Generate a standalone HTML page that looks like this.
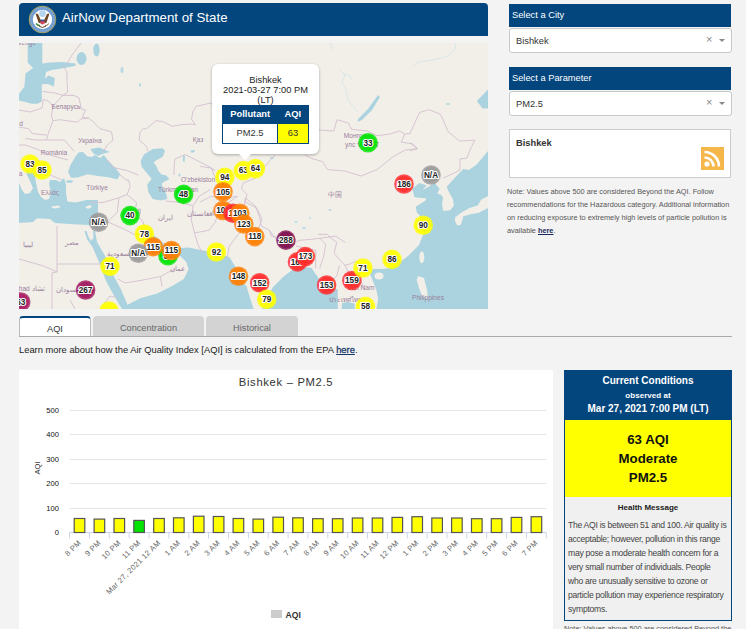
<!DOCTYPE html>
<html><head><meta charset="utf-8">
<style>
*{box-sizing:border-box;margin:0;padding:0}
html,body{width:746px;height:629px;overflow:hidden;background:#f3f3f3;font-family:"Liberation Sans",sans-serif;color:#333}
.abs{position:absolute}
#hdr{left:19px;top:3px;width:469px;height:33px;background:#03467e;border-radius:4px 4px 0 0}
#hdr .t{position:absolute;left:43px;top:7px;font-size:13.3px;color:#fff;white-space:nowrap}
#map{left:19px;top:43px;width:469px;height:266px;overflow:hidden;background:#f2efe9}
.sh{left:509px;width:222px;height:23px;background:#03467e;color:#fff;font-size:9.3px;padding:6px 0 0 3px;white-space:nowrap}
.sel{left:509px;width:222.5px;height:25px;background:#fff;border:1px solid #c8c8c8;border-radius:3px;font-size:9.3px;color:#333;padding:7px 0 0 6px}
.sel .x{position:absolute;left:196px;top:3.5px;font-size:11px;color:#888}
.sel .ar{position:absolute;left:209px;top:10px;width:0;height:0;border-left:3.2px solid transparent;border-right:3.2px solid transparent;border-top:3.6px solid #888}
#cbox{left:509px;top:129px;width:222px;height:49px;background:#fff;border:1px solid #ccc;font-weight:bold;font-size:9.3px;padding:8px 0 0 6px;color:#333}
#rss{left:701px;top:147px;width:23px;height:23px;background:#f6b74a}
#note{left:507px;top:185px;width:226px;font-size:7.33px;line-height:13.07px;color:#555}
#note b{color:#1a2a5a;text-decoration:underline}
.tab{top:316px;height:21px;background:#d3d3d3;border-radius:4px 4px 0 0;font-size:9.2px;color:#666;text-align:center;padding-top:7px}
#tab1{left:19px;width:72px;background:#fff;border:1px solid #bbb;border-top:2px solid #03467e;border-bottom:none;color:#333;padding-top:6px}
#tab2{left:93px;width:111px}
#tab3{left:206px;width:92px}
#tline{left:19px;top:336px;width:713px;height:1px;background:#aaa}
#learn{left:19px;top:345px;font-size:9.35px;color:#222;white-space:nowrap}
#learn b{color:#1a3a6a;text-decoration:underline;text-decoration-thickness:1.2px;font-weight:normal;-webkit-text-stroke:0.3px #1a3a6a}
#chart{left:19px;top:370px;width:534px;height:259px;background:#fff}
#cc{left:564px;top:370px;width:168px;height:251px;border:1.5px solid #03467e;background:#f0f0f0}
#cch{position:absolute;left:0;top:0;width:100%;height:49px;background:#03467e}
#ccy{position:absolute;left:0;top:49px;width:100%;height:76.5px;background:#ffff00}
.ln{position:absolute;left:0;width:100%;text-align:center;font-weight:bold;line-height:1;white-space:nowrap}
#hmt{position:absolute;left:3px;top:147px;width:159.5px;font-size:8.6px;letter-spacing:-0.28px;line-height:14.05px;color:#444}
#note2{left:564px;top:623.5px;font-size:7.33px;color:#555;white-space:nowrap}
</style></head><body>

<div id="hdr" class="abs">
  <svg class="abs" style="left:9px;top:2px" width="29" height="29" viewBox="0 0 29 29">
    <circle cx="14.5" cy="14.5" r="13.3" fill="#6e9bd0" stroke="#b8a64e" stroke-width="0.9"/>
    <circle cx="14.5" cy="14.5" r="11.6" fill="none" stroke="#a9c4e4" stroke-width="0.8" stroke-dasharray="0.8 1.2"/>
    <circle cx="14.5" cy="14.5" r="9.7" fill="#ffffff"/>
    <circle cx="14.5" cy="8.6" r="3.4" fill="#b5d5ec"/>
    <path d="M7.5 8.5 L10 9 L13.2 16 L12.5 18.5 L10.5 17.5 Z" fill="#6a4526"/>
    <path d="M21.5 8.5 L19 9 L15.8 16 L16.5 18.5 L18.5 17.5 Z" fill="#6a4526"/>
    <path d="M12.6 15 L16.4 15 L16.4 18.5 Q14.5 20.5 12.6 18.5 Z" fill="#d9455a"/>
    <rect x="12.6" y="14.6" width="3.8" height="1.6" fill="#2e4f9a"/>
    <path d="M8 18.5 Q10 21 12 20.5" stroke="#4a8a3a" stroke-width="1.6" fill="none"/>
    <path d="M21 18.5 Q19 21 17 20.5" stroke="#8a6a40" stroke-width="1" fill="none"/>
    <path d="M11 21 L14.5 22.5 L18 21" stroke="#6a4526" stroke-width="1" fill="none"/>
  </svg>
  <div class="t">AirNow Department of State</div>
</div>

<div id="map" class="abs">
<svg width="469" height="266" viewBox="19 43 469 266" style="display:block;position:absolute;left:0;top:0">
<rect x="19" y="43" width="469" height="266" fill="#f2efe9"/>
<polygon fill="#aad3df" points="27.7,43.0 42.3,43.0 42.3,60.4 42.3,63.6 50.0,62.5 62.4,62.0 75.5,63.6 75.5,65.8 64.6,68.0 51.6,70.1 46.0,72.0 45.0,78.8 48.3,75.6 54.8,78.0 54.0,86.4 48.0,84.0 41.8,84.3 41.8,101.6 37.5,103.8 32.0,103.8 19.0,100.5 19.0,94.0 24.4,86.4 25.5,73.4 33.1,68.0 27.7,62.5"/>
<ellipse cx="81.5" cy="58.5" rx="5" ry="6.5" fill="#aad3df"/>
<ellipse cx="96.5" cy="50" rx="3.2" ry="6.5" fill="#aad3df"/>
<polygon fill="#aad3df" points="68.1,172.0 70.3,165.3 75.5,156.4 78.5,152.6 83.0,151.9 87.5,156.4 91.9,157.1 94.9,154.9 100.1,157.9 103.8,154.9 108.3,160.8 115.7,168.3 120.2,174.2 117.2,179.4 108.3,177.2 96.4,175.7 87.5,174.2 78.5,177.2 71.1,178.0"/>
<polygon fill="#aad3df" points="90.4,148.9 99.4,147.4 109.8,151.9 102.3,154.1 98.0,156.0 93.4,153.4"/>
<polygon fill="#aad3df" points="19.0,183.0 22.0,190.0 25.0,194.0 30.0,193.0 33.0,188.0 30.0,181.0 27.0,175.0 26.0,170.0 32.0,170.0 35.0,176.0 36.0,183.0 38.0,192.0 41.0,197.0 45.0,200.0 49.0,199.0 51.0,192.0 49.0,184.0 50.0,180.0 56.0,180.0 60.0,182.0 64.0,178.0 66.0,185.0 66.0,193.0 67.3,201.4 75.7,202.6 86.5,200.0 97.9,200.0 98.0,213.0 98.6,221.0 89.3,225.0 73.0,224.3 55.0,223.0 50.0,219.0 37.0,218.3 33.0,222.0 19.0,223.0"/>
<polygon fill="#f2efe9" points="51.7,206.5 58.0,205.5 61.0,207.0 56.0,208.5 52.0,208.0"/>
<polygon fill="#f2efe9" points="85.0,207.0 90.0,205.0 92.0,207.0 88.0,209.0"/>
<ellipse cx="69.5" cy="181.5" rx="3.5" ry="1.3" fill="#aad3df"/>
<polygon fill="#aad3df" points="140.6,161.1 143.9,154.5 152.8,148.9 162.8,148.3 165.0,151.1 162.8,156.7 156.1,160.6 153.4,162.2 156.1,165.6 158.4,171.1 161.7,174.5 166.2,175.6 169.5,179.0 165.0,181.2 161.7,183.4 162.8,187.8 166.2,193.4 167.3,199.0 160.6,200.6 152.8,199.0 148.4,192.3 147.2,184.5 151.7,178.9 147.2,173.4 141.7,166.7"/>
<polygon fill="#aad3df" points="190.6,150.5 195.0,150.0 194.0,152.5 191.0,152.5"/>
<polygon fill="#aad3df" points="183.0,155.6 185.0,156.0 184.5,162.2 182.8,161.0"/>
<polygon fill="#aad3df" points="179.0,173.4 180.6,174.0 180.0,176.7 178.4,176.0"/>
<polygon fill="#aad3df" points="84.5,231.0 86.5,231.0 88.5,237.0 91.0,241.0 93.5,238.0 93.0,231.0 95.0,231.0 97.0,242.0 105.0,255.7 114.0,276.6 121.0,289.5 125.5,300.0 127.5,305.0 130.0,309.0 122.0,309.0 115.0,297.5 106.0,281.0 99.0,262.0 92.5,247.0 87.0,239.0"/>
<polygon fill="#aad3df" points="152.0,234.0 157.0,238.0 163.0,243.0 170.0,246.0 176.0,248.5 178.0,251.0 175.0,253.0 169.0,251.0 162.0,248.0 155.0,242.0 150.0,237.0"/>
<polygon fill="#aad3df" points="124.0,309.0 127.0,305.0 140.3,298.2 157.2,293.4 171.7,286.2 183.8,279.0 188.6,269.3 186.2,262.0 178.9,254.8 176.5,250.0 180.0,248.0 188.6,247.6 200.7,250.0 215.1,252.4 229.6,257.2 236.9,269.3 234.4,276.5 240.0,280.0 246.5,286.2 250.0,298.0 253.7,309.0"/>
<polygon fill="#aad3df" points="262.2,309.0 268.0,296.0 272.9,287.2 283.6,276.4 292.2,270.0 302.9,266.8 311.5,267.9 315.8,274.3 322.2,282.9 330.0,287.0 337.8,289.4 337.8,309.0"/>
<polygon fill="#aad3df" points="341.6,309.0 342.0,303.0 348.0,302.0 354.7,303.5 354.7,309.0"/>
<polygon fill="#aad3df" points="376.3,309.0 378.2,298.8 376.3,289.4 372.5,280.0 370.0,274.0 373.0,269.0 383.0,269.0 390.0,268.0 400.3,262.0 408.0,256.0 413.0,251.0 419.0,245.0 422.9,235.3 425.0,228.0 420.5,216.3 416.9,212.7 415.7,206.7 425.3,200.8 426.5,198.4 414.5,197.2 412.2,188.8 419.3,182.9 426.5,185.3 422.9,190.0 428.8,186.5 434.8,182.9 439.6,188.8 437.2,193.6 440.8,194.8 443.1,197.2 442.0,204.3 443.1,210.9 450.3,210.3 453.9,205.5 452.7,198.4 449.1,192.4 446.7,186.8 456.7,175.7 463.4,169.0 469.0,170.1 476.7,164.5 488.0,151.0 488.0,309.0"/>
<polygon fill="#aad3df" points="488.0,89.5 476.8,101.0 482.6,108.6 488.0,108.6"/>
<polygon fill="#f2efe9" points="455.0,217.5 461.0,212.7 469.4,207.9 477.7,205.5 481.3,199.6 488.0,196.0 488.0,207.9 478.9,212.7 471.8,213.9 463.4,216.3 461.0,224.6 457.5,225.8 455.0,221.0"/>
<ellipse cx="421.8" cy="257.3" rx="2.5" ry="6" fill="#f2efe9"/>
<polygon fill="#f2efe9" points="418.0,276.0 424.0,278.0 427.0,290.0 428.0,299.0 422.0,296.0 419.0,288.0 416.7,280.0"/>
<ellipse cx="379" cy="276" rx="4.5" ry="3.5" fill="#f2efe9"/>
<polygon fill="#aad3df" points="378.0,95.0 380.0,97.0 372.0,110.0 362.0,120.0 357.6,122.0 358.0,119.0 368.0,109.0"/>
<polyline fill="none" stroke="#cfe2e6" stroke-width="0.7" points="340,70 345,75 342,82 346,90 348,100 354,108 357,112"/>
<polyline fill="none" stroke="#cfe2e6" stroke-width="0.7" points="343,73 350,76 352,80"/>
<polyline fill="none" stroke="#cfe2e6" stroke-width="0.7" points="330,43 333,50"/>
<polyline fill="none" stroke="#cfe2e6" stroke-width="0.7" points="455.3,43 455.3,48.5 449.8,55.4 434.6,59.6 418,62.4 412.4,66.5"/>
<ellipse cx="448" cy="104" rx="2" ry="1" fill="#b5d8e3"/>
<ellipse cx="296" cy="222" rx="1.5" ry="1" fill="#b5d8e3"/>
<ellipse cx="304" cy="228" rx="2" ry="1" fill="#b5d8e3"/>
<ellipse cx="310" cy="218" rx="1.2" ry="0.8" fill="#b5d8e3"/>
<ellipse cx="330" cy="210" rx="1.5" ry="1" fill="#b5d8e3"/>
<ellipse cx="272" cy="158" rx="2" ry="1" fill="#b5d8e3"/>
<ellipse cx="122" cy="70" rx="1.5" ry="3" fill="#b5d8e3"/>
<ellipse cx="140" cy="85" rx="1" ry="2" fill="#b5d8e3"/>
<polyline fill="none" stroke="#d2c0cf" stroke-width="0.9" points="81.0,43.0 72.0,55.0 65.5,66.0"/>
<polyline fill="none" stroke="#d2c0cf" stroke-width="0.9" points="63.0,66.0 67.0,72.0 66.9,80.0 67.7,92.2"/>
<polyline fill="none" stroke="#d2c0cf" stroke-width="0.9" points="42.5,91.4 55.0,93.0 62.8,95.4 67.7,92.2"/>
<polyline fill="none" stroke="#d2c0cf" stroke-width="0.9" points="43.3,99.5 48.2,101.0 53.0,106.0 62.8,95.4 74.0,95.4 79.0,97.8 81.5,109.2 85.5,110.0 82.3,117.3 88.7,118.1"/>
<polyline fill="none" stroke="#d2c0cf" stroke-width="0.9" points="53.0,106.0 51.4,115.7 53.0,120.6 59.6,119.7 77.4,122.2 80.6,119.0 88.7,118.1"/>
<polyline fill="none" stroke="#d2c0cf" stroke-width="0.9" points="88.7,118.1 93.6,122.2 100.0,128.7 111.5,131.9 113.0,140.0 107.4,144.9 103.3,151.4"/>
<polyline fill="none" stroke="#d2c0cf" stroke-width="0.9" points="53.0,120.6 48.2,133.5 46.6,140.0 64.4,140.0 74.2,151.4"/>
<polyline fill="none" stroke="#d2c0cf" stroke-width="0.9" points="19.0,127.0 28.7,128.7 32.0,133.5 46.6,135.1"/>
<polyline fill="none" stroke="#d2c0cf" stroke-width="0.9" points="25.5,138.4 35.0,140.0 46.6,140.0"/>
<polyline fill="none" stroke="#d2c0cf" stroke-width="0.9" points="19.0,145.0 25.5,145.0 38.5,149.7 50.0,155.0 68.0,160.0"/>
<polyline fill="none" stroke="#d2c0cf" stroke-width="0.9" points="19.0,110.0 30.0,112.0 42.0,108.0 43.3,99.5"/>
<polyline fill="none" stroke="#d2c0cf" stroke-width="0.9" points="38.0,160.0 45.0,165.0 50.0,175.0 62.0,180.0"/>
<polyline fill="none" stroke="#d2c0cf" stroke-width="0.9" points="107.4,160.0 112.7,167.4 127.2,170.6 138.4,175.0"/>
<polyline fill="none" stroke="#d2c0cf" stroke-width="0.9" points="119.0,174.0 126.0,180.0 128.6,180.0 130.2,186.4 127.0,194.5"/>
<polyline fill="none" stroke="#d2c0cf" stroke-width="0.9" points="148.0,151.3 146.5,146.5 139.2,140.0 140.0,132.0 143.3,128.8 146.5,128.8 156.0,120.7 162.6,121.5 172.2,126.4 180.2,124.8 190.0,124.0 195.5,124.8 191.5,119.0 193.1,111.0 196.3,106.3 210.8,103.0 213.0,106.0"/>
<polyline fill="none" stroke="#d2c0cf" stroke-width="0.9" points="173.8,175.0 174.6,159.3 185.0,154.5 194.7,159.3 207.6,165.8 215.0,170.6 211.3,168.1 200.0,166.3"/>
<polyline fill="none" stroke="#d2c0cf" stroke-width="0.9" points="211.3,168.1 215.0,177.5 222.0,182.0"/>
<polyline fill="none" stroke="#d2c0cf" stroke-width="0.9" points="263.8,168.1 271.3,158.8 275.0,155.0"/>
<polyline fill="none" stroke="#d2c0cf" stroke-width="0.9" points="263.8,168.1 256.3,177.5 243.2,183.2 241.3,188.8 247.0,194.4 245.0,202.0 256.3,207.6 262.0,218.8 258.0,230.0"/>
<polyline fill="none" stroke="#d2c0cf" stroke-width="0.9" points="200.0,202.0 211.3,196.3 224.4,198.2 237.5,196.3"/>
<polyline fill="none" stroke="#d2c0cf" stroke-width="0.9" points="305.0,155.0 312.6,158.8 322.5,161.5 327.3,169.5 345.0,171.1 361.1,176.0 377.2,169.5 385.2,163.0 393.3,156.6 404.6,150.2 417.4,148.6 412.6,143.8 401.3,142.2 404.6,134.1 399.7,130.9 390.0,134.1 377.2,135.7 367.6,131.0 351.5,129.3 348.3,122.9 337.0,119.7 333.8,131.0 319.3,130.1 318.0,128.0"/>
<polyline fill="none" stroke="#d2c0cf" stroke-width="0.9" points="404.6,134.1 410.0,133.5 419.5,112.5 429.1,109.6 440.5,114.4 448.2,131.6 459.6,141.1 474.9,140.1 470.0,150.0 467.0,158.0 460.0,159.0 460.0,170.0 452.0,174.0 443.3,178.0"/>
<polyline fill="none" stroke="#d2c0cf" stroke-width="0.9" points="410.0,143.0 417.6,148.7 410.0,150.6"/>
<polyline fill="none" stroke="#d2c0cf" stroke-width="0.9" points="90.0,202.5 102.9,202.5 119.0,197.7 127.0,194.5"/>
<polyline fill="none" stroke="#d2c0cf" stroke-width="0.9" points="119.0,197.7 117.3,212.2 107.7,221.8"/>
<polyline fill="none" stroke="#d2c0cf" stroke-width="0.9" points="127.0,194.5 136.6,202.5 135.0,212.2 143.0,221.8 144.7,229.9"/>
<polyline fill="none" stroke="#d2c0cf" stroke-width="0.9" points="107.7,221.8 122.2,228.3 135.0,234.7"/>
<polyline fill="none" stroke="#d2c0cf" stroke-width="0.9" points="99.7,228.3 107.7,221.8"/>
<polyline fill="none" stroke="#d2c0cf" stroke-width="0.9" points="95.0,222.0 98.0,230.0 99.7,228.3"/>
<polyline fill="none" stroke="#d2c0cf" stroke-width="0.9" points="165.6,201.0 180.0,202.5 193.0,205.7 199.4,196.1 210.0,189.7"/>
<polyline fill="none" stroke="#d2c0cf" stroke-width="0.9" points="193.0,205.7 191.3,220.2 194.6,233.0 197.8,244.3 202.6,254.0"/>
<polyline fill="none" stroke="#d2c0cf" stroke-width="0.9" points="194.6,233.0 209.0,230.2 215.1,222.2 219.1,212.1 225.0,205.0 237.5,196.3"/>
<polyline fill="none" stroke="#d2c0cf" stroke-width="0.9" points="245.3,198.0 241.2,230.2 235.2,238.3 229.2,246.3 227.2,258.4"/>
<polyline fill="none" stroke="#d2c0cf" stroke-width="0.9" points="245.3,198.0 255.3,206.0 259.3,216.1 261.4,226.2 269.4,230.2 271.4,236.2 281.5,238.3 295.5,242.3 299.6,240.3 311.6,239.3 319.7,238.3 335.8,236.2 345.0,242.3"/>
<polyline fill="none" stroke="#d2c0cf" stroke-width="0.9" points="269.4,230.2 275.0,238.0 287.5,244.3 295.5,244.3"/>
<polyline fill="none" stroke="#d2c0cf" stroke-width="0.9" points="296.0,246.0 305.0,248.0 315.7,250.3 315.7,268.4"/>
<polyline fill="none" stroke="#d2c0cf" stroke-width="0.9" points="319.7,238.3 325.7,244.3 323.7,256.4 319.7,268.4"/>
<polyline fill="none" stroke="#d2c0cf" stroke-width="0.9" points="318.0,234.4 327.4,234.4 331.4,238.4 336.8,242.4 334.1,253.2 339.5,259.9 344.9,265.2 350.2,263.9 355.6,261.2 361.0,263.9 366.3,269.2"/>
<polyline fill="none" stroke="#d2c0cf" stroke-width="0.9" points="339.5,265.2 336.8,276.0 331.4,281.3 336.8,294.7"/>
<polyline fill="none" stroke="#d2c0cf" stroke-width="0.9" points="344.9,265.2 350.2,276.0 361.0,281.3 365.0,290.0"/>
<polyline fill="none" stroke="#d2c0cf" stroke-width="0.9" points="57.0,226.0 57.0,272.0"/>
<polyline fill="none" stroke="#d2c0cf" stroke-width="0.9" points="57.0,264.0 101.0,264.0"/>
<polyline fill="none" stroke="#d2c0cf" stroke-width="0.9" points="19.0,259.0 43.3,265.9 57.0,272.0 52.0,272.8 52.0,309.0"/>
<polyline fill="none" stroke="#d2c0cf" stroke-width="0.9" points="70.0,300.0 75.0,309.0"/>
<polyline fill="none" stroke="#d2c0cf" stroke-width="0.9" points="100.0,309.0 110.0,296.0 117.0,297.6"/>
<polyline fill="none" stroke="#d2c0cf" stroke-width="0.9" points="118.0,279.0 125.0,283.0 143.0,280.0 160.4,276.6 175.0,268.6"/>
<polyline fill="none" stroke="#d2c0cf" stroke-width="0.9" points="160.4,276.6 162.0,286.3"/>
<text x="66" y="109" text-anchor="middle" font-size="6.6" fill="#9a7f9c" style="font-family:'Liberation Sans'">Беларусь</text>
<text x="90" y="143" text-anchor="middle" font-size="6.6" fill="#9a7f9c" style="font-family:'Liberation Sans'">Україна</text>
<text x="54" y="155" text-anchor="middle" font-size="6.6" fill="#9a7f9c" style="font-family:'Liberation Sans'">România</text>
<text x="97" y="190" text-anchor="middle" font-size="6.6" fill="#9a7f9c" style="font-family:'Liberation Sans'">Türkiye</text>
<text x="50" y="195" text-anchor="middle" font-size="6.6" fill="#9a7f9c" style="font-family:'Liberation Sans'">Ελλάς</text>
<text x="198" y="142" text-anchor="middle" font-size="6.6" fill="#9a7f9c" style="font-family:'Liberation Sans'">Қаз</text>
<text x="198" y="182" text-anchor="middle" font-size="6.6" fill="#9a7f9c" style="font-family:'Liberation Sans'">O'zbekiston</text>
<text x="178" y="192" text-anchor="middle" font-size="6.6" fill="#9a7f9c" style="font-family:'Liberation Sans'">Türkmenistan</text>
<text x="165" y="220" text-anchor="middle" font-size="6.6" fill="#9a7f9c" style="font-family:'Liberation Sans'">ایران</text>
<text x="72" y="245" text-anchor="middle" font-size="6.6" fill="#9a7f9c" style="font-family:'Liberation Sans'">مصر</text>
<text x="28" y="247" text-anchor="middle" font-size="6.6" fill="#9a7f9c" style="font-family:'Liberation Sans'">ليبيا</text>
<text x="30" y="291" text-anchor="middle" font-size="6.6" fill="#9a7f9c" style="font-family:'Liberation Sans'">chad تشاد</text>
<text x="68" y="292" text-anchor="middle" font-size="6.6" fill="#9a7f9c" style="font-family:'Liberation Sans'">السودان</text>
<text x="177" y="271" text-anchor="middle" font-size="6.6" fill="#9a7f9c" style="font-family:'Liberation Sans'">عمان</text>
<text x="120" y="256" text-anchor="middle" font-size="6.6" fill="#9a7f9c" style="font-family:'Liberation Sans'">السعودية</text>
<text x="132" y="214" text-anchor="middle" font-size="6.6" fill="#9a7f9c" style="font-family:'Liberation Sans'">العراق</text>
<text x="200" y="216" text-anchor="middle" font-size="6.6" fill="#9a7f9c" style="font-family:'Liberation Sans'">افغانستان</text>
<text x="335" y="197" text-anchor="middle" font-size="6.6" fill="#9a7f9c" style="font-family:'Liberation Sans'">中国</text>
<text x="355" y="138" text-anchor="middle" font-size="6.6" fill="#9a7f9c" style="font-family:'Liberation Sans'">Монгол</text>
<text x="362" y="147" text-anchor="middle" font-size="6.6" fill="#9a7f9c" style="font-family:'Liberation Sans'">улс ᠮᠣᠩᠭᠣᠯ</text>
<text x="361" y="290" text-anchor="middle" font-size="6.6" fill="#9a7f9c" style="font-family:'Liberation Sans'">Việt Nam</text>
<text x="345" y="302" text-anchor="middle" font-size="6.6" fill="#9a7f9c" style="font-family:'Liberation Sans'">ประเทศไทย</text>
<text x="428" y="300" text-anchor="middle" font-size="6.6" fill="#9a7f9c" style="font-family:'Liberation Sans'">Philippines</text>
<text x="25" y="45" text-anchor="middle" font-size="6.6" fill="#9a7f9c" style="font-family:'Liberation Sans'">Sverige</text>
<text x="21" y="126" text-anchor="middle" font-size="6.6" fill="#9a7f9c" style="font-family:'Liberation Sans'">d</text>
<text x="20.5" y="176" text-anchor="middle" font-size="6.6" fill="#9a7f9c" style="font-family:'Liberation Sans'">a</text>
<circle cx="30" cy="164" r="9.8" fill="#ffff00" fill-opacity="0.8"/>
<circle cx="30" cy="164" r="8.3" fill="#ffff00" fill-opacity="0.7"/>
<text x="30" y="166.8" text-anchor="middle" font-size="8.2" font-weight="bold" fill="#222" stroke="#fff" stroke-width="2.2" paint-order="stroke" style="font-family:'Liberation Sans'">83</text>
<circle cx="42" cy="170" r="9.8" fill="#ffff00" fill-opacity="0.8"/>
<circle cx="42" cy="170" r="8.3" fill="#ffff00" fill-opacity="0.7"/>
<text x="42" y="172.8" text-anchor="middle" font-size="8.2" font-weight="bold" fill="#222" stroke="#fff" stroke-width="2.2" paint-order="stroke" style="font-family:'Liberation Sans'">85</text>
<circle cx="183.6" cy="194.4" r="9.8" fill="#00e400" fill-opacity="0.8"/>
<circle cx="183.6" cy="194.4" r="8.3" fill="#00e400" fill-opacity="0.7"/>
<text x="183.6" y="197.20000000000002" text-anchor="middle" font-size="8.2" font-weight="bold" fill="#222" stroke="#fff" stroke-width="2.2" paint-order="stroke" style="font-family:'Liberation Sans'">48</text>
<circle cx="130" cy="215.6" r="9.8" fill="#00e400" fill-opacity="0.8"/>
<circle cx="130" cy="215.6" r="8.3" fill="#00e400" fill-opacity="0.7"/>
<text x="130" y="218.4" text-anchor="middle" font-size="8.2" font-weight="bold" fill="#222" stroke="#fff" stroke-width="2.2" paint-order="stroke" style="font-family:'Liberation Sans'">40</text>
<circle cx="98.6" cy="222.2" r="9.8" fill="#9a9a9a" fill-opacity="0.8"/>
<circle cx="98.6" cy="222.2" r="8.3" fill="#9a9a9a" fill-opacity="0.7"/>
<text x="98.6" y="225.0" text-anchor="middle" font-size="8.2" font-weight="bold" fill="#222" stroke="#fff" stroke-width="2.2" paint-order="stroke" style="font-family:'Liberation Sans'">N/A</text>
<circle cx="168" cy="255.8" r="9.8" fill="#00e400" fill-opacity="0.8"/>
<circle cx="168" cy="255.8" r="8.3" fill="#00e400" fill-opacity="0.7"/>
<text x="168" y="258.6" text-anchor="middle" font-size="8.2" font-weight="bold" fill="#222" stroke="#fff" stroke-width="2.2" paint-order="stroke" style="font-family:'Liberation Sans'">34</text>
<circle cx="144.4" cy="234" r="9.8" fill="#ffff00" fill-opacity="0.8"/>
<circle cx="144.4" cy="234" r="8.3" fill="#ffff00" fill-opacity="0.7"/>
<text x="144.4" y="236.8" text-anchor="middle" font-size="8.2" font-weight="bold" fill="#222" stroke="#fff" stroke-width="2.2" paint-order="stroke" style="font-family:'Liberation Sans'">78</text>
<circle cx="153.1" cy="246.7" r="9.8" fill="#ff7e00" fill-opacity="0.8"/>
<circle cx="153.1" cy="246.7" r="8.3" fill="#ff7e00" fill-opacity="0.7"/>
<text x="153.1" y="249.5" text-anchor="middle" font-size="8.2" font-weight="bold" fill="#222" stroke="#fff" stroke-width="2.2" paint-order="stroke" style="font-family:'Liberation Sans'">115</text>
<circle cx="138.3" cy="253.2" r="9.8" fill="#9a9a9a" fill-opacity="0.8"/>
<circle cx="138.3" cy="253.2" r="8.3" fill="#9a9a9a" fill-opacity="0.7"/>
<text x="138.3" y="256.0" text-anchor="middle" font-size="8.2" font-weight="bold" fill="#222" stroke="#fff" stroke-width="2.2" paint-order="stroke" style="font-family:'Liberation Sans'">N/A</text>
<circle cx="171.4" cy="250.5" r="9.8" fill="#ff7e00" fill-opacity="0.8"/>
<circle cx="171.4" cy="250.5" r="8.3" fill="#ff7e00" fill-opacity="0.7"/>
<text x="171.4" y="253.3" text-anchor="middle" font-size="8.2" font-weight="bold" fill="#222" stroke="#fff" stroke-width="2.2" paint-order="stroke" style="font-family:'Liberation Sans'">115</text>
<circle cx="216.4" cy="252" r="9.8" fill="#ffff00" fill-opacity="0.8"/>
<circle cx="216.4" cy="252" r="8.3" fill="#ffff00" fill-opacity="0.7"/>
<text x="216.4" y="254.8" text-anchor="middle" font-size="8.2" font-weight="bold" fill="#222" stroke="#fff" stroke-width="2.2" paint-order="stroke" style="font-family:'Liberation Sans'">92</text>
<circle cx="238.5" cy="276.2" r="9.8" fill="#ff7e00" fill-opacity="0.8"/>
<circle cx="238.5" cy="276.2" r="8.3" fill="#ff7e00" fill-opacity="0.7"/>
<text x="238.5" y="279.0" text-anchor="middle" font-size="8.2" font-weight="bold" fill="#222" stroke="#fff" stroke-width="2.2" paint-order="stroke" style="font-family:'Liberation Sans'">148</text>
<circle cx="110" cy="266.4" r="9.8" fill="#ffff00" fill-opacity="0.8"/>
<circle cx="110" cy="266.4" r="8.3" fill="#ffff00" fill-opacity="0.7"/>
<text x="110" y="269.2" text-anchor="middle" font-size="8.2" font-weight="bold" fill="#222" stroke="#fff" stroke-width="2.2" paint-order="stroke" style="font-family:'Liberation Sans'">71</text>
<circle cx="85.6" cy="290" r="9.8" fill="#a0145c" fill-opacity="0.8"/>
<circle cx="85.6" cy="290" r="8.3" fill="#a0145c" fill-opacity="0.7"/>
<text x="85.6" y="292.8" text-anchor="middle" font-size="8.2" font-weight="bold" fill="#222" stroke="#fff" stroke-width="2.2" paint-order="stroke" style="font-family:'Liberation Sans'">267</text>
<circle cx="20.7" cy="302" r="9.8" fill="#a81a62" fill-opacity="0.8"/>
<circle cx="20.7" cy="302" r="8.3" fill="#a81a62" fill-opacity="0.7"/>
<text x="20.7" y="304.8" text-anchor="middle" font-size="8.2" font-weight="bold" fill="#222" stroke="#fff" stroke-width="2.2" paint-order="stroke" style="font-family:'Liberation Sans'">63</text>
<circle cx="109" cy="311" r="9.8" fill="#ffff00" fill-opacity="0.8"/>
<circle cx="109" cy="311" r="8.3" fill="#ffff00" fill-opacity="0.7"/>
<circle cx="224.8" cy="177.3" r="9.8" fill="#ffff00" fill-opacity="0.8"/>
<circle cx="224.8" cy="177.3" r="8.3" fill="#ffff00" fill-opacity="0.7"/>
<text x="224.8" y="180.10000000000002" text-anchor="middle" font-size="8.2" font-weight="bold" fill="#222" stroke="#fff" stroke-width="2.2" paint-order="stroke" style="font-family:'Liberation Sans'">94</text>
<circle cx="243.3" cy="170.6" r="9.8" fill="#ffff00" fill-opacity="0.8"/>
<circle cx="243.3" cy="170.6" r="8.3" fill="#ffff00" fill-opacity="0.7"/>
<text x="243.3" y="173.4" text-anchor="middle" font-size="8.2" font-weight="bold" fill="#222" stroke="#fff" stroke-width="2.2" paint-order="stroke" style="font-family:'Liberation Sans'">63</text>
<circle cx="255.4" cy="168.6" r="9.8" fill="#ffff00" fill-opacity="0.8"/>
<circle cx="255.4" cy="168.6" r="8.3" fill="#ffff00" fill-opacity="0.7"/>
<text x="255.4" y="171.4" text-anchor="middle" font-size="8.2" font-weight="bold" fill="#222" stroke="#fff" stroke-width="2.2" paint-order="stroke" style="font-family:'Liberation Sans'">64</text>
<circle cx="223" cy="191.8" r="9.8" fill="#ff7e00" fill-opacity="0.8"/>
<circle cx="223" cy="191.8" r="8.3" fill="#ff7e00" fill-opacity="0.7"/>
<text x="223" y="194.60000000000002" text-anchor="middle" font-size="8.2" font-weight="bold" fill="#222" stroke="#fff" stroke-width="2.2" paint-order="stroke" style="font-family:'Liberation Sans'">105</text>
<circle cx="223" cy="210.5" r="9.8" fill="#ff7e00" fill-opacity="0.8"/>
<circle cx="223" cy="210.5" r="8.3" fill="#ff7e00" fill-opacity="0.7"/>
<text x="223" y="213.3" text-anchor="middle" font-size="8.2" font-weight="bold" fill="#222" stroke="#fff" stroke-width="2.2" paint-order="stroke" style="font-family:'Liberation Sans'">101</text>
<circle cx="233" cy="213.2" r="9.8" fill="#ff2a2a" fill-opacity="0.8"/>
<circle cx="233" cy="213.2" r="8.3" fill="#ff2a2a" fill-opacity="0.7"/>
<text x="233" y="216.0" text-anchor="middle" font-size="8.2" font-weight="bold" fill="#222" stroke="#fff" stroke-width="2.2" paint-order="stroke" style="font-family:'Liberation Sans'">10</text>
<circle cx="239.8" cy="213.2" r="9.8" fill="#ff7e00" fill-opacity="0.8"/>
<circle cx="239.8" cy="213.2" r="8.3" fill="#ff7e00" fill-opacity="0.7"/>
<text x="239.8" y="216.0" text-anchor="middle" font-size="8.2" font-weight="bold" fill="#222" stroke="#fff" stroke-width="2.2" paint-order="stroke" style="font-family:'Liberation Sans'">103</text>
<circle cx="243.8" cy="224" r="9.8" fill="#ff7e00" fill-opacity="0.8"/>
<circle cx="243.8" cy="224" r="8.3" fill="#ff7e00" fill-opacity="0.7"/>
<text x="243.8" y="226.8" text-anchor="middle" font-size="8.2" font-weight="bold" fill="#222" stroke="#fff" stroke-width="2.2" paint-order="stroke" style="font-family:'Liberation Sans'">123</text>
<circle cx="254.8" cy="236.6" r="9.8" fill="#ff7e00" fill-opacity="0.8"/>
<circle cx="254.8" cy="236.6" r="8.3" fill="#ff7e00" fill-opacity="0.7"/>
<text x="254.8" y="239.4" text-anchor="middle" font-size="8.2" font-weight="bold" fill="#222" stroke="#fff" stroke-width="2.2" paint-order="stroke" style="font-family:'Liberation Sans'">118</text>
<circle cx="285.9" cy="240.1" r="9.8" fill="#7e0c4c" fill-opacity="0.8"/>
<circle cx="285.9" cy="240.1" r="8.3" fill="#7e0c4c" fill-opacity="0.7"/>
<text x="285.9" y="242.9" text-anchor="middle" font-size="8.2" font-weight="bold" fill="#222" stroke="#fff" stroke-width="2.2" paint-order="stroke" style="font-family:'Liberation Sans'">288</text>
<circle cx="297.5" cy="261.9" r="9.8" fill="#ff2a2a" fill-opacity="0.8"/>
<circle cx="297.5" cy="261.9" r="8.3" fill="#ff2a2a" fill-opacity="0.7"/>
<text x="297.5" y="264.7" text-anchor="middle" font-size="8.2" font-weight="bold" fill="#222" stroke="#fff" stroke-width="2.2" paint-order="stroke" style="font-family:'Liberation Sans'">167</text>
<circle cx="305.4" cy="256.6" r="9.8" fill="#ff2a2a" fill-opacity="0.8"/>
<circle cx="305.4" cy="256.6" r="8.3" fill="#ff2a2a" fill-opacity="0.7"/>
<text x="305.4" y="259.40000000000003" text-anchor="middle" font-size="8.2" font-weight="bold" fill="#222" stroke="#fff" stroke-width="2.2" paint-order="stroke" style="font-family:'Liberation Sans'">173</text>
<circle cx="259.7" cy="282.8" r="9.8" fill="#ff2a2a" fill-opacity="0.8"/>
<circle cx="259.7" cy="282.8" r="8.3" fill="#ff2a2a" fill-opacity="0.7"/>
<text x="259.7" y="285.6" text-anchor="middle" font-size="8.2" font-weight="bold" fill="#222" stroke="#fff" stroke-width="2.2" paint-order="stroke" style="font-family:'Liberation Sans'">152</text>
<circle cx="266.7" cy="299.3" r="9.8" fill="#ffff00" fill-opacity="0.8"/>
<circle cx="266.7" cy="299.3" r="8.3" fill="#ffff00" fill-opacity="0.7"/>
<text x="266.7" y="302.1" text-anchor="middle" font-size="8.2" font-weight="bold" fill="#222" stroke="#fff" stroke-width="2.2" paint-order="stroke" style="font-family:'Liberation Sans'">79</text>
<circle cx="326.6" cy="285" r="9.8" fill="#ff2a2a" fill-opacity="0.8"/>
<circle cx="326.6" cy="285" r="8.3" fill="#ff2a2a" fill-opacity="0.7"/>
<text x="326.6" y="287.8" text-anchor="middle" font-size="8.2" font-weight="bold" fill="#222" stroke="#fff" stroke-width="2.2" paint-order="stroke" style="font-family:'Liberation Sans'">153</text>
<circle cx="351.9" cy="280.5" r="9.8" fill="#ff2a2a" fill-opacity="0.8"/>
<circle cx="351.9" cy="280.5" r="8.3" fill="#ff2a2a" fill-opacity="0.7"/>
<text x="351.9" y="283.3" text-anchor="middle" font-size="8.2" font-weight="bold" fill="#222" stroke="#fff" stroke-width="2.2" paint-order="stroke" style="font-family:'Liberation Sans'">159</text>
<circle cx="362.9" cy="268" r="9.8" fill="#ffff00" fill-opacity="0.8"/>
<circle cx="362.9" cy="268" r="8.3" fill="#ffff00" fill-opacity="0.7"/>
<text x="362.9" y="270.8" text-anchor="middle" font-size="8.2" font-weight="bold" fill="#222" stroke="#fff" stroke-width="2.2" paint-order="stroke" style="font-family:'Liberation Sans'">71</text>
<circle cx="365.5" cy="306.4" r="9.8" fill="#ffff00" fill-opacity="0.8"/>
<circle cx="365.5" cy="306.4" r="8.3" fill="#ffff00" fill-opacity="0.7"/>
<text x="365.5" y="309.2" text-anchor="middle" font-size="8.2" font-weight="bold" fill="#222" stroke="#fff" stroke-width="2.2" paint-order="stroke" style="font-family:'Liberation Sans'">58</text>
<circle cx="368" cy="142.8" r="9.8" fill="#00e400" fill-opacity="0.8"/>
<circle cx="368" cy="142.8" r="8.3" fill="#00e400" fill-opacity="0.7"/>
<text x="368" y="145.60000000000002" text-anchor="middle" font-size="8.2" font-weight="bold" fill="#222" stroke="#fff" stroke-width="2.2" paint-order="stroke" style="font-family:'Liberation Sans'">33</text>
<circle cx="431" cy="175" r="9.8" fill="#9a9a9a" fill-opacity="0.8"/>
<circle cx="431" cy="175" r="8.3" fill="#9a9a9a" fill-opacity="0.7"/>
<text x="431" y="177.8" text-anchor="middle" font-size="8.2" font-weight="bold" fill="#222" stroke="#fff" stroke-width="2.2" paint-order="stroke" style="font-family:'Liberation Sans'">N/A</text>
<circle cx="404" cy="184" r="9.8" fill="#ff2a2a" fill-opacity="0.8"/>
<circle cx="404" cy="184" r="8.3" fill="#ff2a2a" fill-opacity="0.7"/>
<text x="404" y="186.8" text-anchor="middle" font-size="8.2" font-weight="bold" fill="#222" stroke="#fff" stroke-width="2.2" paint-order="stroke" style="font-family:'Liberation Sans'">186</text>
<circle cx="423.2" cy="225.3" r="9.8" fill="#ffff00" fill-opacity="0.8"/>
<circle cx="423.2" cy="225.3" r="8.3" fill="#ffff00" fill-opacity="0.7"/>
<text x="423.2" y="228.10000000000002" text-anchor="middle" font-size="8.2" font-weight="bold" fill="#222" stroke="#fff" stroke-width="2.2" paint-order="stroke" style="font-family:'Liberation Sans'">90</text>
<circle cx="392" cy="259.4" r="9.8" fill="#ffff00" fill-opacity="0.8"/>
<circle cx="392" cy="259.4" r="8.3" fill="#ffff00" fill-opacity="0.7"/>
<text x="392" y="262.2" text-anchor="middle" font-size="8.2" font-weight="bold" fill="#222" stroke="#fff" stroke-width="2.2" paint-order="stroke" style="font-family:'Liberation Sans'">86</text>
</svg>
<div style="position:absolute;left:193px;top:21px;width:107px;height:90px;background:#fff;border-radius:6px;box-shadow:0 1px 3px rgba(0,0,0,0.3);text-align:center;font-size:9.3px;line-height:10.2px;color:#222;padding-top:11px">Bishkek<br>2021-03-27 7:00 PM<br>(LT)
<table style="position:absolute;left:10px;top:41px;width:87px;height:39px;border-collapse:collapse;border:1.5px solid #03467e;font-size:9.3px">
<tr style="height:18px;background:#03467e;color:#fff;font-weight:bold"><td style="width:55px;padding-bottom:2px">Pollutant</td><td style="padding-bottom:2px">AQI</td></tr>
<tr style="background:#fff;color:#333"><td style="border-right:1.5px solid #03467e">PM2.5</td><td style="background:#ffff00">63</td></tr>
</table></div>
<div style="position:absolute;left:219px;top:110px;width:0;height:0;border-left:7px solid transparent;border-right:7px solid transparent;border-top:7px solid #fff"></div>
</div>

<div class="sh abs" style="top:4px">Select a City</div>
<div class="sel abs" style="top:28px">Bishkek<span class="x">×</span><span class="ar"></span></div>
<div class="sh abs" style="top:67px">Select a Parameter</div>
<div class="sel abs" style="top:91px">PM2.5<span class="x">×</span><span class="ar"></span></div>
<div id="cbox" class="abs">Bishkek</div>
<svg id="rss" class="abs" width="23" height="23" viewBox="0 0 23 23" style="background:#f6b74a">
  <circle cx="6" cy="17" r="2.6" fill="#fff"/>
  <path d="M3.5 10.5 A9 9 0 0 1 12.5 19.5" stroke="#fff" stroke-width="2.6" fill="none"/>
  <path d="M3.5 5 A14.5 14.5 0 0 1 18 19.5" stroke="#fff" stroke-width="2.6" fill="none"/>
</svg>
<div id="note" class="abs">Note: Values above 500 are considered Beyond the AQI. Follow recommendations for the Hazardous category. Additional information on reducing exposure to extremely high levels of particle pollution is available <b>here</b>.</div>

<div class="tab abs" id="tab1">AQI</div>
<div class="tab abs" id="tab2">Concentration</div>
<div class="tab abs" id="tab3">Historical</div>
<div id="tline" class="abs"></div>
<div id="learn" class="abs">Learn more about how the Air Quality Index [AQI] is calculated from the EPA <b>here</b>.</div>

<div id="chart" class="abs">
</div>
<svg class="abs" style="left:0;top:0" width="746" height="629" viewBox="0 0 746 629">
<text x="286" y="385.5" text-anchor="middle" font-size="11.2" letter-spacing="0.7" fill="#333">Bishkek – PM2.5</text>
<line x1="69.6" x2="546.3" y1="410.5" y2="410.5" stroke="#e6e6e6" stroke-width="1"/>
<text x="59" y="413.1" text-anchor="end" font-size="7.6" fill="#111">500</text>
<line x1="69.6" x2="546.3" y1="434.5" y2="434.5" stroke="#e6e6e6" stroke-width="1"/>
<text x="59" y="437.1" text-anchor="end" font-size="7.6" fill="#111">400</text>
<line x1="69.6" x2="546.3" y1="459.5" y2="459.5" stroke="#e6e6e6" stroke-width="1"/>
<text x="59" y="462.1" text-anchor="end" font-size="7.6" fill="#111">300</text>
<line x1="69.6" x2="546.3" y1="483.5" y2="483.5" stroke="#e6e6e6" stroke-width="1"/>
<text x="59" y="486.1" text-anchor="end" font-size="7.6" fill="#111">200</text>
<line x1="69.6" x2="546.3" y1="508.5" y2="508.5" stroke="#e6e6e6" stroke-width="1"/>
<text x="59" y="511.1" text-anchor="end" font-size="7.6" fill="#111">100</text>
<text x="59" y="534.7" text-anchor="end" font-size="7.6" fill="#111">0</text>
<text transform="translate(40,468) rotate(-90)" text-anchor="middle" font-size="7.6" fill="#333">AQI</text>
<line x1="69.6" x2="546.3" y1="532.5" y2="532.5" stroke="#ccd6eb" stroke-width="1"/>
<line x1="69.6" x2="69.6" y1="532.5" y2="538.5" stroke="#ccd6eb" stroke-width="1"/>
<line x1="89.5" x2="89.5" y1="532.5" y2="538.5" stroke="#ccd6eb" stroke-width="1"/>
<line x1="109.3" x2="109.3" y1="532.5" y2="538.5" stroke="#ccd6eb" stroke-width="1"/>
<line x1="129.2" x2="129.2" y1="532.5" y2="538.5" stroke="#ccd6eb" stroke-width="1"/>
<line x1="149.0" x2="149.0" y1="532.5" y2="538.5" stroke="#ccd6eb" stroke-width="1"/>
<line x1="168.9" x2="168.9" y1="532.5" y2="538.5" stroke="#ccd6eb" stroke-width="1"/>
<line x1="188.8" x2="188.8" y1="532.5" y2="538.5" stroke="#ccd6eb" stroke-width="1"/>
<line x1="208.6" x2="208.6" y1="532.5" y2="538.5" stroke="#ccd6eb" stroke-width="1"/>
<line x1="228.5" x2="228.5" y1="532.5" y2="538.5" stroke="#ccd6eb" stroke-width="1"/>
<line x1="248.4" x2="248.4" y1="532.5" y2="538.5" stroke="#ccd6eb" stroke-width="1"/>
<line x1="268.2" x2="268.2" y1="532.5" y2="538.5" stroke="#ccd6eb" stroke-width="1"/>
<line x1="288.1" x2="288.1" y1="532.5" y2="538.5" stroke="#ccd6eb" stroke-width="1"/>
<line x1="307.9" x2="307.9" y1="532.5" y2="538.5" stroke="#ccd6eb" stroke-width="1"/>
<line x1="327.8" x2="327.8" y1="532.5" y2="538.5" stroke="#ccd6eb" stroke-width="1"/>
<line x1="347.7" x2="347.7" y1="532.5" y2="538.5" stroke="#ccd6eb" stroke-width="1"/>
<line x1="367.5" x2="367.5" y1="532.5" y2="538.5" stroke="#ccd6eb" stroke-width="1"/>
<line x1="387.4" x2="387.4" y1="532.5" y2="538.5" stroke="#ccd6eb" stroke-width="1"/>
<line x1="407.3" x2="407.3" y1="532.5" y2="538.5" stroke="#ccd6eb" stroke-width="1"/>
<line x1="427.1" x2="427.1" y1="532.5" y2="538.5" stroke="#ccd6eb" stroke-width="1"/>
<line x1="447.0" x2="447.0" y1="532.5" y2="538.5" stroke="#ccd6eb" stroke-width="1"/>
<line x1="466.8" x2="466.8" y1="532.5" y2="538.5" stroke="#ccd6eb" stroke-width="1"/>
<line x1="486.7" x2="486.7" y1="532.5" y2="538.5" stroke="#ccd6eb" stroke-width="1"/>
<line x1="506.6" x2="506.6" y1="532.5" y2="538.5" stroke="#ccd6eb" stroke-width="1"/>
<line x1="526.4" x2="526.4" y1="532.5" y2="538.5" stroke="#ccd6eb" stroke-width="1"/>
<line x1="546.3" x2="546.3" y1="532.5" y2="538.5" stroke="#ccd6eb" stroke-width="1"/>
<rect x="74.2" y="518.5" width="10.6" height="14.0" fill="#ffff00" stroke="#555" stroke-width="1.2"/>
<text transform="translate(81.3,543.3) rotate(-45)" text-anchor="end" font-size="7.6" letter-spacing="0.25" fill="#666">8 PM</text>
<rect x="94.1" y="519.1" width="10.6" height="13.4" fill="#ffff00" stroke="#555" stroke-width="1.2"/>
<text transform="translate(101.2,543.3) rotate(-45)" text-anchor="end" font-size="7.6" letter-spacing="0.25" fill="#666">9 PM</text>
<rect x="114.0" y="518.5" width="10.6" height="14.0" fill="#ffff00" stroke="#555" stroke-width="1.2"/>
<text transform="translate(121.1,543.3) rotate(-45)" text-anchor="end" font-size="7.6" letter-spacing="0.25" fill="#666">10 PM</text>
<rect x="133.8" y="520.4" width="10.6" height="12.1" fill="#00e400" stroke="#555" stroke-width="1.2"/>
<text transform="translate(140.9,543.3) rotate(-45)" text-anchor="end" font-size="7.6" letter-spacing="0.25" fill="#666">11 PM</text>
<rect x="153.7" y="518.5" width="10.6" height="14.0" fill="#ffff00" stroke="#555" stroke-width="1.2"/>
<text transform="translate(160.8,543.3) rotate(-45)" text-anchor="end" font-size="7.6" letter-spacing="0.25" fill="#666">Mar 27, 2021 12 AM</text>
<rect x="173.5" y="517.8" width="10.6" height="14.7" fill="#ffff00" stroke="#555" stroke-width="1.2"/>
<text transform="translate(180.6,543.3) rotate(-45)" text-anchor="end" font-size="7.6" letter-spacing="0.25" fill="#666">1 AM</text>
<rect x="193.4" y="516.2" width="10.6" height="16.3" fill="#ffff00" stroke="#555" stroke-width="1.2"/>
<text transform="translate(200.5,543.3) rotate(-45)" text-anchor="end" font-size="7.6" letter-spacing="0.25" fill="#666">2 AM</text>
<rect x="213.3" y="516.5" width="10.6" height="16.0" fill="#ffff00" stroke="#555" stroke-width="1.2"/>
<text transform="translate(220.4,543.3) rotate(-45)" text-anchor="end" font-size="7.6" letter-spacing="0.25" fill="#666">3 AM</text>
<rect x="233.1" y="518.5" width="10.6" height="14.0" fill="#ffff00" stroke="#555" stroke-width="1.2"/>
<text transform="translate(240.2,543.3) rotate(-45)" text-anchor="end" font-size="7.6" letter-spacing="0.25" fill="#666">4 AM</text>
<rect x="253.0" y="519.1" width="10.6" height="13.4" fill="#ffff00" stroke="#555" stroke-width="1.2"/>
<text transform="translate(260.1,543.3) rotate(-45)" text-anchor="end" font-size="7.6" letter-spacing="0.25" fill="#666">5 AM</text>
<rect x="272.9" y="517.2" width="10.6" height="15.3" fill="#ffff00" stroke="#555" stroke-width="1.2"/>
<text transform="translate(280.0,543.3) rotate(-45)" text-anchor="end" font-size="7.6" letter-spacing="0.25" fill="#666">6 AM</text>
<rect x="292.7" y="517.8" width="10.6" height="14.7" fill="#ffff00" stroke="#555" stroke-width="1.2"/>
<text transform="translate(299.8,543.3) rotate(-45)" text-anchor="end" font-size="7.6" letter-spacing="0.25" fill="#666">7 AM</text>
<rect x="312.6" y="518.7" width="10.6" height="13.8" fill="#ffff00" stroke="#555" stroke-width="1.2"/>
<text transform="translate(319.7,543.3) rotate(-45)" text-anchor="end" font-size="7.6" letter-spacing="0.25" fill="#666">8 AM</text>
<rect x="332.4" y="518.7" width="10.6" height="13.8" fill="#ffff00" stroke="#555" stroke-width="1.2"/>
<text transform="translate(339.5,543.3) rotate(-45)" text-anchor="end" font-size="7.6" letter-spacing="0.25" fill="#666">9 AM</text>
<rect x="352.3" y="518.0" width="10.6" height="14.5" fill="#ffff00" stroke="#555" stroke-width="1.2"/>
<text transform="translate(359.4,543.3) rotate(-45)" text-anchor="end" font-size="7.6" letter-spacing="0.25" fill="#666">10 AM</text>
<rect x="372.2" y="518.0" width="10.6" height="14.5" fill="#ffff00" stroke="#555" stroke-width="1.2"/>
<text transform="translate(379.3,543.3) rotate(-45)" text-anchor="end" font-size="7.6" letter-spacing="0.25" fill="#666">11 AM</text>
<rect x="392.0" y="517.4" width="10.6" height="15.1" fill="#ffff00" stroke="#555" stroke-width="1.2"/>
<text transform="translate(399.1,543.3) rotate(-45)" text-anchor="end" font-size="7.6" letter-spacing="0.25" fill="#666">12 PM</text>
<rect x="411.9" y="516.7" width="10.6" height="15.8" fill="#ffff00" stroke="#555" stroke-width="1.2"/>
<text transform="translate(419.0,543.3) rotate(-45)" text-anchor="end" font-size="7.6" letter-spacing="0.25" fill="#666">1 PM</text>
<rect x="431.8" y="518.0" width="10.6" height="14.5" fill="#ffff00" stroke="#555" stroke-width="1.2"/>
<text transform="translate(438.9,543.3) rotate(-45)" text-anchor="end" font-size="7.6" letter-spacing="0.25" fill="#666">2 PM</text>
<rect x="451.6" y="518.0" width="10.6" height="14.5" fill="#ffff00" stroke="#555" stroke-width="1.2"/>
<text transform="translate(458.7,543.3) rotate(-45)" text-anchor="end" font-size="7.6" letter-spacing="0.25" fill="#666">3 PM</text>
<rect x="471.5" y="518.7" width="10.6" height="13.8" fill="#ffff00" stroke="#555" stroke-width="1.2"/>
<text transform="translate(478.6,543.3) rotate(-45)" text-anchor="end" font-size="7.6" letter-spacing="0.25" fill="#666">4 PM</text>
<rect x="491.3" y="518.7" width="10.6" height="13.8" fill="#ffff00" stroke="#555" stroke-width="1.2"/>
<text transform="translate(498.4,543.3) rotate(-45)" text-anchor="end" font-size="7.6" letter-spacing="0.25" fill="#666">5 PM</text>
<rect x="511.2" y="517.4" width="10.6" height="15.1" fill="#ffff00" stroke="#555" stroke-width="1.2"/>
<text transform="translate(518.3,543.3) rotate(-45)" text-anchor="end" font-size="7.6" letter-spacing="0.25" fill="#666">6 PM</text>
<rect x="531.1" y="516.7" width="10.6" height="15.8" fill="#ffff00" stroke="#555" stroke-width="1.2"/>
<text transform="translate(538.2,543.3) rotate(-45)" text-anchor="end" font-size="7.6" letter-spacing="0.25" fill="#666">7 PM</text>
<rect x="271" y="610" width="11" height="8" fill="#cccccc"/>
<text x="285.5" y="617.5" font-size="8.6" font-weight="bold" fill="#333">AQI</text>
</svg>

<div id="cc" class="abs">
  <div id="cch"></div>
  <div id="ccy"></div>
  <div class="ln" style="top:5.2px;font-size:10px;color:#fff">Current Conditions</div>
  <div class="ln" style="top:21.2px;font-size:8px;color:#fff;letter-spacing:0.05px">observed at</div>
  <div class="ln" style="top:32.9px;font-size:10px;color:#fff">Mar 27, 2021 7:00 PM (LT)</div>
  <div class="ln" style="top:61.9px;font-size:13.25px;color:#111">63 AQI</div>
  <div class="ln" style="top:80.9px;font-size:13.25px;color:#111">Moderate</div>
  <div class="ln" style="top:99.6px;font-size:13.25px;color:#111">PM2.5</div>
  <div class="ln" style="top:133.4px;font-size:8px;color:#222">Health Message</div>
  <div id="hmt">The AQI is between 51 and 100. Air quality is acceptable; however, pollution in this range may pose a moderate health concern for a very small number of individuals. People who are unusually sensitive to ozone or particle pollution may experience respiratory symptoms.</div>
</div>
<div id="note2" class="abs">Note: Values above 500 are considered Beyond the</div>
</body></html>
